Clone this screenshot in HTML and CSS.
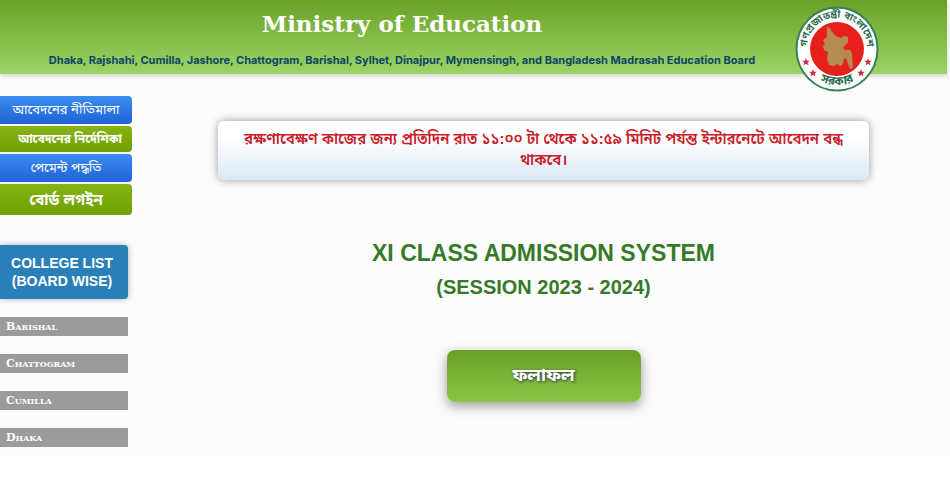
FILE: index.html
```html
<!DOCTYPE html>
<html lang="bn">
<head>
    <meta charset="UTF-8">
    <meta name="viewport" content="width=device-width, initial-scale=1.0">
    <title>XI Class Admission System</title>
    <link rel="stylesheet" href="styles.css">
</head>
<body>
    <div class="page">
        <header class="header">
            <div class="header-text">
                <h1>Ministry of Education</h1>
                <p>Dhaka, Rajshahi, Cumilla, Jashore, Chattogram, Barishal, Sylhet, Dinajpur, Mymensingh, and Bangladesh Madrasah Education Board</p>
            </div>
            <svg class="logo" viewBox="0 0 84 86" role="img" aria-label="Government of Bangladesh">
                <defs>
                    <path id="topArc" d="M12.500 47 A 30 30 0 1 1 71.500 47"/>
                    <path id="bottomArc" d="M6 43 A 36 36 0 0 0 78 43"/>
                    <path id="star" d="M0-4 L1-1.200 L4-1.200 L1.600.600 L2.500 3.500 L0 1.700 L-2.500 3.500 L-1.600.600 L-4-1.200 L-1-1.200Z"/>
                </defs>
                <ellipse cx="42" cy="43" rx="40.500" ry="41.500" fill="#fff" stroke="#38805a" stroke-width="2"/>
                <circle cx="42" cy="43" r="27" fill="#e8201c"/>
                <path fill="#b58b52" d="M32 21l3 1 2 4 4 4 5 2 3-2 4 1v5l-5 6 2 2 5 0 2 4 1 14-3 1-2-5-2-6-2 1-1 5-3 2-3-2-3 2-5-1-2-7 1-6-4-2-1-4 2-2-2-4 4-3z"/>
                <text class="logo-text"><textPath href="#topArc" startOffset="50%">গণপ্রজাতন্ত্রী বাংলাদেশ</textPath></text>
                <text class="logo-text bottom"><textPath href="#bottomArc" startOffset="50%">সরকার</textPath></text>
                <g fill="#d22a3c">
                    <use href="#star" x="11" y="56"/>
                    <use href="#star" x="18" y="67"/>
                    <use href="#star" x="73" y="56"/>
                    <use href="#star" x="66" y="67"/>
                </g>
            </svg>
        </header>

        <div class="content">
            <aside class="sidebar">
                <nav class="menu">
                    <a href="#" class="menu-btn blue">আবেদনের নীতিমালা</a>
                    <a href="#" class="menu-btn green small">আবেদনের নির্দেশিকা</a>
                    <a href="#" class="menu-btn blue">পেমেন্ট পদ্ধতি</a>
                    <a href="#" class="menu-btn green large">বোর্ড লগইন</a>
                </nav>

                <h2 class="college-title">COLLEGE LIST<br>(BOARD WISE)</h2>

                <nav class="boards">
                    <a href="#">Barishal</a>
                    <a href="#">Chattogram</a>
                    <a href="#">Cumilla</a>
                    <a href="#">Dhaka</a>
                </nav>
            </aside>

            <main class="main">
                <div class="notice">রক্ষণাবেক্ষণ কাজের জন্য প্রতিদিন রাত ১১:০০ টা থেকে ১১:৫৯ মিনিট পর্যন্ত ইন্টারনেটে আবেদন বন্ধ থাকবে।</div>
                <h2 class="system-title">XI CLASS ADMISSION SYSTEM</h2>
                <h3 class="session">(SESSION 2023 - 2024)</h3>
                <button type="button" class="result-btn">ফলাফল</button>
            </main>
        </div>
    </div>
</body>
</html>
```
FILE: styles.css
```css
* {
    box-sizing: border-box;
}

body {
    margin: 0;
    background-color: #fff;
    font-family: "Liberation Sans", Arial, "Noto Sans Bengali", sans-serif;
}

a {
    text-decoration: none;
}

.page {
    background-color: #fcfcfc;
    padding-bottom: 8px;
}

/* Header */
.header {
    display: flex;
    align-items: flex-start;
    height: 74px;
    margin-right: 3px;
    background: linear-gradient(#6ba127, #9bd465);
    box-shadow: 0 2px 4px #ccd2c8;
}

.header-text {
    flex: 0 1 804px;
    text-align: center;
    white-space: nowrap;
}

.header h1 {
    margin: 8px 0 0;
    font-family: "DejaVu Serif", Georgia, serif;
    font-size: 23px;
    line-height: 32px;
    color: #fff;
}

.header p {
    margin: 12px 0 0;
    font-family: Inter, "Liberation Sans", sans-serif;
    font-size: 11px;
    font-weight: bold;
    line-height: 16px;
    color: #0b4668;
}

.logo {
    flex: none;
    width: 84px;
    height: 86px;
    margin: 6px 0 0 -9px;
}

.logo-text {
    font-size: 10px;
    font-weight: bold;
    fill: #2d7050;
    text-anchor: middle;
}

.logo-text.bottom {
    font-size: 12px;
}

/* Sidebar */
.content {
    display: flex;
    padding-top: 22px;
}

.sidebar {
    flex: none;
    width: 132px;
}

.menu {
    display: flex;
    flex-direction: column;
    gap: 2px;
}

.menu-btn {
    height: 28px;
    border-radius: 0 4px 4px 0;
    color: #fff;
    font-size: 13px;
    line-height: 28px;
    text-align: center;
    white-space: nowrap;
}

.blue {
    background: linear-gradient(#3c8cf0, #1f63d6);
}

.green {
    background: linear-gradient(#86b315, #6fa000);
}

.small {
    height: 26px;
    padding-left: 8px;
    font-size: 12px;
    font-weight: bold;
    line-height: 26px;
}

.large {
    height: 31px;
    font-size: 15px;
    font-weight: bold;
    line-height: 31px;
}

.college-title {
    margin: 30px 4px 18px 0;
    padding: 9px 8px 9px 4px;
    border-radius: 0 4px 4px 0;
    background-color: #2980b9;
    box-shadow: 0 0 6px #aab4bc;
    color: #fff;
    font-size: 14px;
    line-height: 18px;
    text-align: center;
    white-space: nowrap;
}

.boards {
    display: flex;
    flex-direction: column;
    gap: 18px;
    margin-right: 4px;
}

.boards a {
    height: 19px;
    padding-left: 6px;
    background-color: #9b9b9b;
    color: #fff;
    font-family: "DejaVu Serif", Georgia, serif;
    font-size: 11px;
    font-variant: small-caps;
    font-weight: bold;
    line-height: 19px;
}

/* Main */
.main {
    flex: 1;
    display: flex;
    flex-direction: column;
    align-items: center;
    padding: 25px 81px 0 86px;
}

.notice {
    width: 100%;
    min-height: 59px;
    padding: 7px 20px;
    border-radius: 6px;
    background: linear-gradient(#fff 30%, #d9e8f6);
    box-shadow: 0 0 8px #999;
    color: #c8202a;
    font-size: 15px;
    font-weight: 600;
    line-height: 21px;
    text-align: center;
}

.system-title,
.session {
    margin: 58px 0 0;
    color: #357a28;
    font-size: 23px;
    line-height: 30px;
    white-space: nowrap;
}

.session {
    margin-top: 7px;
    font-size: 20px;
    line-height: 24px;
}

.result-btn {
    width: 194px;
    height: 52px;
    margin-top: 51px;
    border: none;
    border-radius: 8px;
    background: linear-gradient(#69a025, #8bc547);
    box-shadow: 0 4px 12px #999;
    color: #fff;
    font-family: inherit;
    font-size: 18px;
    font-weight: bold;
    text-shadow: 1px 1px 3px #234;
    cursor: pointer;
}
```
